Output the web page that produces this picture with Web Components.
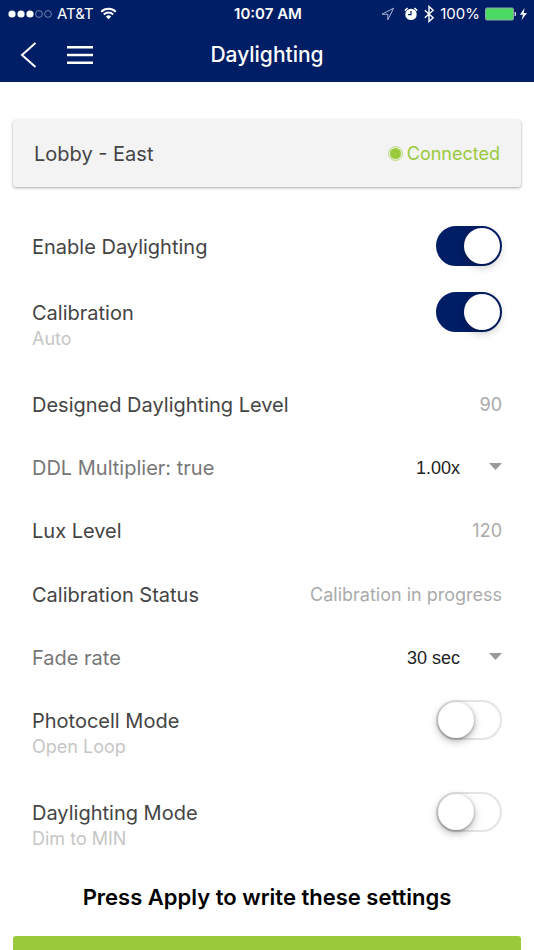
<!DOCTYPE html>
<html lang="en">
<head>
<meta charset="utf-8">
<meta name="viewport" content="width=device-width, initial-scale=1">
<title>Daylighting</title>
<style>
    :root {
        --navy: #001e66;
        --green: #9aca3c;
        --text: #444;
        --muted: #aaa;
    }

    body {
        margin: 0;
        background: #fff;
        color: var(--text);
        font-family: Inter, "Liberation Sans", sans-serif;
    }
</style>
</head>
<body>
<app-screen>
    <status-bar slot="header" carrier="AT&amp;T" time="10:07 AM" battery="100%"></status-bar>
    <nav-bar slot="header">Daylighting</nav-bar>

    <device-card status="Connected">Lobby - East</device-card>
    <settings-list>
        <toggle-row label="Enable Daylighting" checked></toggle-row>
        <toggle-row label="Calibration" hint="Auto" checked></toggle-row>
        <value-row label="Designed Daylighting Level">90</value-row>
        <select-row label="DDL Multiplier: true" value="1.00x"></select-row>
        <value-row label="Lux Level">120</value-row>
        <value-row label="Calibration Status">Calibration in progress</value-row>
        <select-row label="Fade rate" value="30 sec"></select-row>
        <toggle-row label="Photocell Mode" hint="Open Loop"></toggle-row>
        <toggle-row label="Daylighting Mode" hint="Dim to MIN"></toggle-row>
    </settings-list>
    <apply-panel action="Apply">Press Apply to write these settings</apply-panel>
</app-screen>

<script>
class AppScreen extends HTMLElement {
    constructor() {
        super();
        this.attachShadow({mode: "open"}).innerHTML = `
        <style>
        :host {
            display: flex;
            flex-direction: column;
            height: 100vh;
        }

        header {
            flex: none;
            background: var(--navy);
            color: #fff;
        }

        main {
            flex: 1;
            min-height: 0;
            overflow-y: auto;
            scrollbar-width: none;
            padding: 38px 13px 0;
        }
        </style>
        <header><slot name="header"></slot></header>
        <main><slot></slot></main>
        `;
    }
}

class StatusBar extends HTMLElement {
    connectedCallback() {
        this.attachShadow({mode: "open"}).innerHTML = `
        <style>
        :host {
            display: grid;
            grid-template-columns: 1fr auto 1fr;
            align-items: center;
            height: 27px;
            padding: 0 6px 0 8px;
            font-size: 15px;
            line-height: 20px;
        }

        .side {
            display: flex;
            align-items: center;
            gap: 5px;
        }

        .right {
            justify-content: flex-end;
        }

        .time {
            font-weight: 600;
        }

        svg {
            display: block;
            flex: none;
        }
        </style>
        <div class="side">
            <svg width="44" height="10" viewBox="0 0 44 10" fill="#fff">
                <circle cx="4" cy="5" r="3.6"/>
                <circle cx="13" cy="5" r="3.6"/>
                <circle cx="22" cy="5" r="3.6"/>
                <g fill="none" stroke="#8d9bc2" stroke-width=".8">
                    <circle cx="31" cy="5" r="3.4"/>
                    <circle cx="40" cy="5" r="3.4"/>
                </g>
            </svg>
            <span>${this.getAttribute("carrier")}</span>
            <svg width="18" height="13" viewBox="-1 0 18 13" fill="none" stroke="#fff" stroke-width="1.9">
                <path d="M1.2 4.8a10.4 10.4 0 0 1 14.6 0M3.8 7.5a6.7 6.7 0 0 1 9.4 0"/>
                <path d="M5.8 9.4a4 4 0 0 1 5.4 0L8.5 12.2z" fill="#fff" stroke="none"/>
            </svg>
        </div>
        <div class="time">${this.getAttribute("time")}</div>
        <div class="side right">
            <svg width="18" height="14" viewBox="0 0 18 14" fill="none" stroke="#aab5d2" stroke-width="1">
                <path d="M12.6 1.2L1 7.2h5.8v5.6z"/>
            </svg>
            <svg width="14" height="14" viewBox="0 0 14 14" fill="#fff">
                <circle cx="7" cy="7.4" r="5.7"/>
                <path d="M.8 3.6L3.6 1M13.2 3.6L10.4 1" stroke="#fff" stroke-width="1.5"/>
                <path d="M7 4v3.7H4.2" fill="none" stroke="#001e66" stroke-width="1.2"/>
            </svg>
            <svg width="12" height="18" viewBox="0 0 12 18" fill="none" stroke="#fff" stroke-width="1.4">
                <path d="M1.8 5.200l8.400 7.600L6 16.500v-15l4.200 3.700-8.400 7.600"/>
            </svg>
            <span>${this.getAttribute("battery")}</span>
            <svg width="43" height="14" viewBox="1 0 43 14">
                <rect x="1.500" y="1" width="28" height="12" rx="1.500" fill="#4cd964" stroke="#8fa9a8"/>
                <path d="M31 5q1.600 2 0 4z" fill="#fff" stroke="#fff" stroke-width=".6"/>
                <path d="M40.500 1L36 7.700h3L37.500 13 43 6h-3.200z" fill="#fff"/>
            </svg>
        </div>
        `;
    }
}

class NavBar extends HTMLElement {
    constructor() {
        super();
        this.attachShadow({mode: "open"}).innerHTML = `
        <style>
        :host {
            display: grid;
            grid-template-columns: 1fr auto 1fr;
            align-items: center;
            height: 55px;
            padding: 0 16px;
        }

        .actions {
            display: flex;
            gap: 21px;
        }

        button {
            padding: 4px;
            border: 0;
            background: none;
            color: inherit;
        }

        svg {
            display: block;
        }

        h1 {
            margin: 0;
            font-size: 21px;
            line-height: 28px;
            font-weight: 500;
        }
        </style>
        <div class="actions">
            <button type="button" aria-label="Back">
                <svg width="17" height="26" viewBox="0 0 17 26" fill="none" stroke="#fff" stroke-width="2">
                    <path d="M15.500 1L2 13l13.500 12"/>
                </svg>
            </button>
            <button type="button" aria-label="Menu">
                <svg width="28" height="26" viewBox="0 0 28 26" fill="none" stroke="#fff" stroke-width="2.400">
                    <path d="M1 5.200h26M1 13h26M1 20.800h26"/>
                </svg>
            </button>
        </div>
        <h1><slot></slot></h1>
        `;
    }
}

class DeviceCard extends HTMLElement {
    connectedCallback() {
        this.attachShadow({mode: "open"}).innerHTML = `
        <style>
        :host {
            display: flex;
            align-items: center;
            justify-content: space-between;
            height: 67px;
            padding: 0 21px;
            border-radius: 3px;
            background: #f3f3f3;
            box-shadow: 0 1px 3px rgba(0, 0, 0, .35);
            font-size: 20px;
            line-height: 24px;
        }

        .status {
            display: flex;
            align-items: center;
            gap: 4px;
            color: var(--green);
            font-size: 18px;
        }
        </style>
        <slot></slot>
        <span class="status">
            <svg width="15" height="15" viewBox="0 0 15 15" fill="#9aca3c">
                <circle cx="7.500" cy="7.500" r="5.500"/>
                <circle cx="7.500" cy="7.500" r="6.900" fill="none" stroke="#9aca3c" stroke-width=".7"/>
            </svg>
            ${this.getAttribute("status")}
        </span>
        `;
    }
}

class SettingsList extends HTMLElement {
    constructor() {
        super();
        this.attachShadow({mode: "open"}).innerHTML = `
        <style>
        :host {
            display: block;
            padding: 28px 19px 0;
        }
        </style>
        <slot></slot>
        `;
    }
}

// toggle-row: label, optional hint below it, and an on/off switch
class ToggleRow extends HTMLElement {
    connectedCallback() {
        const hint = this.getAttribute("hint");
        this.attachShadow({mode: "open"}).innerHTML = `
        <style>
        :host {
            display: flex;
            align-items: flex-start;
            justify-content: space-between;
            box-sizing: border-box;
            min-height: 66px;
            padding-top: 11px;
        }

        :host([hint]) {
            min-height: 92px;
        }

        label {
            display: block;
            padding-top: 8px;
            font-size: 20px;
            line-height: 26px;
        }

        .hint {
            display: block;
            color: #c6c6c6;
            font-size: 18px;
        }

        input {
            appearance: none;
            flex: none;
            box-sizing: border-box;
            width: 66px;
            height: 40px;
            margin: 0;
            border: 2px solid #e4e4e4;
            border-radius: 20px;
            background: #fff;
        }

        input::before {
            content: "";
            display: block;
            width: 36px;
            height: 36px;
            border-radius: 50%;
            background: #fff;
            box-shadow: 0 3px 8px rgba(0, 0, 0, .3), 0 1px 3px rgba(0, 0, 0, .3);
        }

        input:checked {
            border-color: var(--navy);
            background: var(--navy);
        }

        input:checked::before {
            margin-left: 26px;
            box-shadow: 0 3px 8px rgba(0, 0, 0, .25);
        }
        </style>
        <label for="switch">
            ${this.getAttribute("label")}
            ${hint ? `<span class="hint">${hint}</span>` : ""}
        </label>
        <input id="switch" type="checkbox" role="switch" ${this.hasAttribute("checked") ? "checked" : ""}>
        `;
    }
}

class ValueRow extends HTMLElement {
    connectedCallback() {
        this.attachShadow({mode: "open"}).innerHTML = `
        <style>
        :host {
            display: flex;
            align-items: center;
            justify-content: space-between;
            height: 64px;
            font-size: 20px;
            line-height: 26px;
        }

        .value {
            color: var(--muted);
            font-size: 18px;
        }
        </style>
        <span>${this.getAttribute("label")}</span>
        <span class="value"><slot></slot></span>
        `;
    }
}

class SelectRow extends HTMLElement {
    connectedCallback() {
        this.attachShadow({mode: "open"}).innerHTML = `
        <style>
        :host {
            display: flex;
            align-items: center;
            justify-content: space-between;
            height: 62px;
            font-size: 20px;
            line-height: 26px;
        }

        label {
            color: #777;
        }

        .picker {
            display: grid;
            align-items: center;
        }

        select,
        svg {
            grid-area: 1 / 1;
        }

        select {
            appearance: none;
            padding: 0 41px 0 0;
            border: 0;
            background: none;
            color: #222;
            font: 18px/26px "Liberation Sans", Arial, sans-serif;
        }

        svg {
            justify-self: end;
            pointer-events: none;
        }
        </style>
        <label for="choice">${this.getAttribute("label")}</label>
        <div class="picker">
            <select id="choice"><option>${this.getAttribute("value")}</option></select>
            <svg width="13" height="10" viewBox="0 0 13 10" fill="#999"><path d="M0 0h13L6.500 7z"/></svg>
        </div>
        `;
    }
}

class ApplyPanel extends HTMLElement {
    connectedCallback() {
        this.attachShadow({mode: "open"}).innerHTML = `
        <style>
        :host {
            display: block;
            padding: 12px 0 24px;
            text-align: center;
        }

        p {
            margin: 0 0 27px;
            color: #000;
            font-size: 22px;
            line-height: 24px;
            font-weight: 600;
        }

        button {
            display: block;
            width: 100%;
            height: 60px;
            border: 0;
            border-radius: 3px;
            background: var(--green);
        }
        </style>
        <p><slot></slot></p>
        <button type="button" aria-label="${this.getAttribute("action")}"></button>
        `;
    }
}

customElements.define("app-screen", AppScreen);
customElements.define("status-bar", StatusBar);
customElements.define("nav-bar", NavBar);
customElements.define("device-card", DeviceCard);
customElements.define("settings-list", SettingsList);
customElements.define("toggle-row", ToggleRow);
customElements.define("value-row", ValueRow);
customElements.define("select-row", SelectRow);
customElements.define("apply-panel", ApplyPanel);
</script>
</body>
</html>
